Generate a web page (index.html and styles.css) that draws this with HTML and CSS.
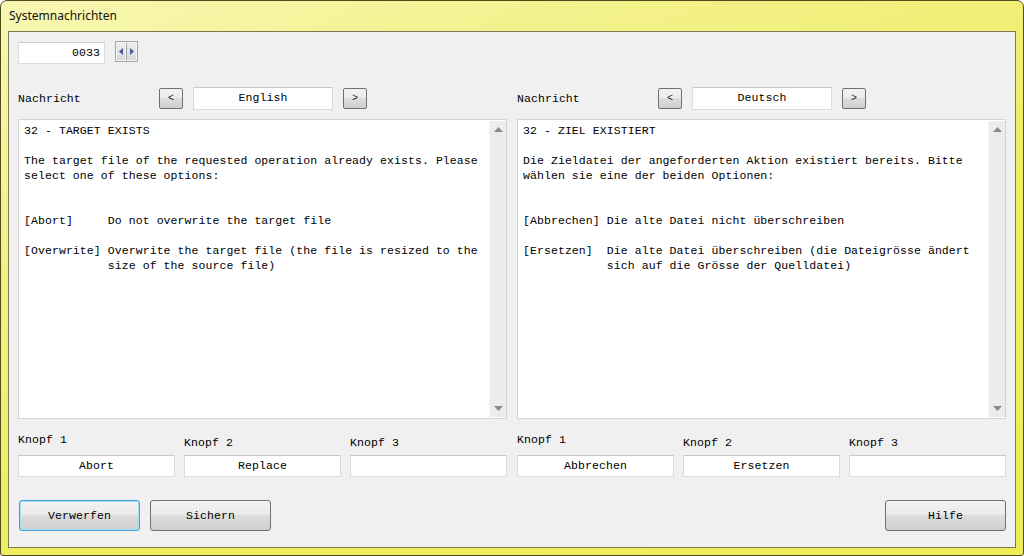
FILE: index.html
```html
<!DOCTYPE html>
<html>
<head>
<meta charset="utf-8">
<link rel="stylesheet" href="styles.css">
</head>
<body>
<div class="window">
  <div class="titlebar">Systemnachrichten</div>
  <div class="panel">
    <div class="toprow">
      <div class="field numfield">0033</div>
      <div class="spinner">
        <div class="spin"><svg width="5" height="7" viewBox="0 0 5 7"><path d="M4 0 L0 3.5 L4 7 Z" fill="#4a5a9a"/></svg></div>
        <div class="spin"><svg width="5" height="7" viewBox="0 0 5 7"><path d="M1 0 L5 3.5 L1 7 Z" fill="#4a5a9a"/></svg></div>
      </div>
    </div>
    <div class="columns">
      <div class="col">
        <div class="navrow">
          <div class="navlabel">Nachricht</div>
          <div class="navbtn">&lt;</div>
          <div class="field langfield">English</div>
          <div class="navbtn">&gt;</div>
        </div>
        <div class="textarea">
          <div class="text">32 - TARGET EXISTS

The target file of the requested operation already exists. Please
select one of these options:


[Abort]     Do not overwrite the target file

[Overwrite] Overwrite the target file (the file is resized to the
            size of the source file)</div>
          <div class="scrollbar">
            <svg width="9" height="5" viewBox="0 0 9 5"><path d="M0 5 L4.5 0 L9 5 Z" fill="#8a8a8a"/></svg>
            <svg width="9" height="5" viewBox="0 0 9 5"><path d="M0 0 L4.5 5 L9 0 Z" fill="#8a8a8a"/></svg>
          </div>
        </div>
        <div class="knopfrow">
          <div class="knopf"><div class="klabel first">Knopf 1</div><div class="field kfield">Abort</div></div>
          <div class="knopf"><div class="klabel">Knopf 2</div><div class="field kfield">Replace</div></div>
          <div class="knopf"><div class="klabel">Knopf 3</div><div class="field kfield"></div></div>
        </div>
      </div>
      <div class="col">
        <div class="navrow">
          <div class="navlabel">Nachricht</div>
          <div class="navbtn">&lt;</div>
          <div class="field langfield">Deutsch</div>
          <div class="navbtn">&gt;</div>
        </div>
        <div class="textarea">
          <div class="text">32 - ZIEL EXISTIERT

Die Zieldatei der angeforderten Aktion existiert bereits. Bitte
wählen sie eine der beiden Optionen:


[Abbrechen] Die alte Datei nicht überschreiben

[Ersetzen]  Die alte Datei überschreiben (die Dateigrösse ändert
            sich auf die Grösse der Quelldatei)</div>
          <div class="scrollbar">
            <svg width="9" height="5" viewBox="0 0 9 5"><path d="M0 5 L4.5 0 L9 5 Z" fill="#8a8a8a"/></svg>
            <svg width="9" height="5" viewBox="0 0 9 5"><path d="M0 0 L4.5 5 L9 0 Z" fill="#8a8a8a"/></svg>
          </div>
        </div>
        <div class="knopfrow">
          <div class="knopf"><div class="klabel first">Knopf 1</div><div class="field kfield">Abbrechen</div></div>
          <div class="knopf"><div class="klabel">Knopf 2</div><div class="field kfield">Ersetzen</div></div>
          <div class="knopf"><div class="klabel">Knopf 3</div><div class="field kfield"></div></div>
        </div>
      </div>
    </div>
    <div class="buttonrow">
      <div class="btn focused">Verwerfen</div>
      <div class="btn">Sichern</div>
      <div class="spacer"></div>
      <div class="btn">Hilfe</div>
    </div>
  </div>
</div>
</body>
</html>
```

FILE: styles.css
```css
html, body {
  margin: 0;
  padding: 0;
}
body {
  width: 1024px;
  height: 556px;
  overflow: hidden;
  font-family: "Liberation Mono", "DejaVu Sans Mono", monospace;
  font-size: 11.5px;
  letter-spacing: 0.08px;
  color: #000;
}
.window {
  box-sizing: border-box;
  width: 1024px;
  height: 556px;
  border: 1px solid #4d4c1a;
  border-radius: 7px 7px 3px 3px;
  background: linear-gradient(160deg, #f9f7b4 0%, #f3f18a 25%, #efed5e 60%, #eeec58 100%);
  display: flex;
  flex-direction: column;
}
.titlebar {
  height: 30px;
  box-sizing: border-box;
  padding: 7px 0 0 8px;
  font-family: "Noto Sans", "Open Sans", sans-serif;
  font-size: 12px;
  letter-spacing: 0;
  line-height: 16px;
  color: #111;
}
.panel {
  box-sizing: border-box;
  margin: 0 7px 0 7px;
  height: 517px;
  background: #f0f0f0;
  border: 1px solid #7a7a55;
  padding: 10px 9px 0 9px;
  display: flex;
  flex-direction: column;
}
.toprow {
  display: flex;
  align-items: flex-start;
  height: 22px;
}
.field {
  box-sizing: border-box;
  background: #fff;
  border: 1px solid #dcdcdc;
  border-top-color: #c8c8c8;
  line-height: 20px;
  text-align: center;
  white-space: nowrap;
}
.numfield {
  width: 87px;
  height: 22px;
  text-align: right;
  padding-right: 4px;
}
.spinner {
  margin-left: 10px;
  margin-top: -1px;
  display: flex;
  border: 1px solid #a6a6a6;
  height: 21px;
  box-sizing: border-box;
}
.spin {
  width: 10px;
  height: 19px;
  background: linear-gradient(#ececec, #dadada);
  border: 1px solid #f4f4f4;
  box-sizing: border-box;
  display: flex;
  align-items: center;
  justify-content: center;
}
.spin + .spin {
  border-left: 1px solid #a6a6a6;
  width: 11px;
}
.columns {
  display: flex;
  gap: 10px;
  margin-top: 23px;
}
.col {
  width: 489px;
  display: flex;
  flex-direction: column;
}
.navrow {
  display: flex;
  align-items: center;
  height: 22px;
}
.navlabel {
  width: 141px;
  line-height: 22px;
  padding-top: 1px;
  box-sizing: border-box;
}
.navbtn {
  box-sizing: border-box;
  width: 24px;
  height: 21px;
  margin-top: 1px;
  border: 1px solid #707070;
  border-radius: 2px;
  background: linear-gradient(#f2f2f2 0%, #ebebeb 45%, #dddddd 50%, #cfcfcf 100%);
  text-align: center;
  line-height: 19px;
  font-size: 10px;
  color: #222;
}
.langfield {
  width: 140px;
  height: 23px;
  margin: 0 10px;
}
.textarea {
  margin-top: 10px;
  height: 300px;
  box-sizing: border-box;
  background: #fff;
  border: 1px solid #d5d5d5;
  display: flex;
}
.text {
  flex: 1;
  white-space: pre;
  line-height: 15px;
  padding: 3px 0 0 5px;
  overflow: hidden;
}
.scrollbar {
  width: 17px;
  box-sizing: border-box;
  margin: 1px 0 1px 0;
  background: #ececec;
  border-left: 1px solid #f7f7f7;
  display: flex;
  flex-direction: column;
  justify-content: space-between;
  align-items: center;
  padding: 6px 0 6px;
}
.knopfrow {
  display: flex;
  gap: 9px;
  margin-top: 13px;
}
.knopf {
  flex: 1;
  display: flex;
  flex-direction: column;
}
.klabel {
  height: 23px;
  box-sizing: border-box;
  padding-top: 3px;
  line-height: 15px;
}
.klabel.first {
  padding-top: 0;
}
.kfield {
  height: 22px;
}
.buttonrow {
  display: flex;
  margin-top: 23px;
  padding-left: 1px;
  padding-right: 0;
  gap: 10px;
}
.spacer {
  flex: 1;
}
.btn {
  box-sizing: border-box;
  width: 121px;
  height: 31px;
  border: 1px solid #707070;
  border-radius: 3px;
  background: linear-gradient(#f2f2f2 0%, #ebebeb 45%, #dddddd 50%, #cfcfcf 100%);
  text-align: center;
  line-height: 29px;
}
.btn.focused {
  border-color: #3c9fd8;
  box-shadow: inset 0 0 0 1px #a7e1f8;
}
```
